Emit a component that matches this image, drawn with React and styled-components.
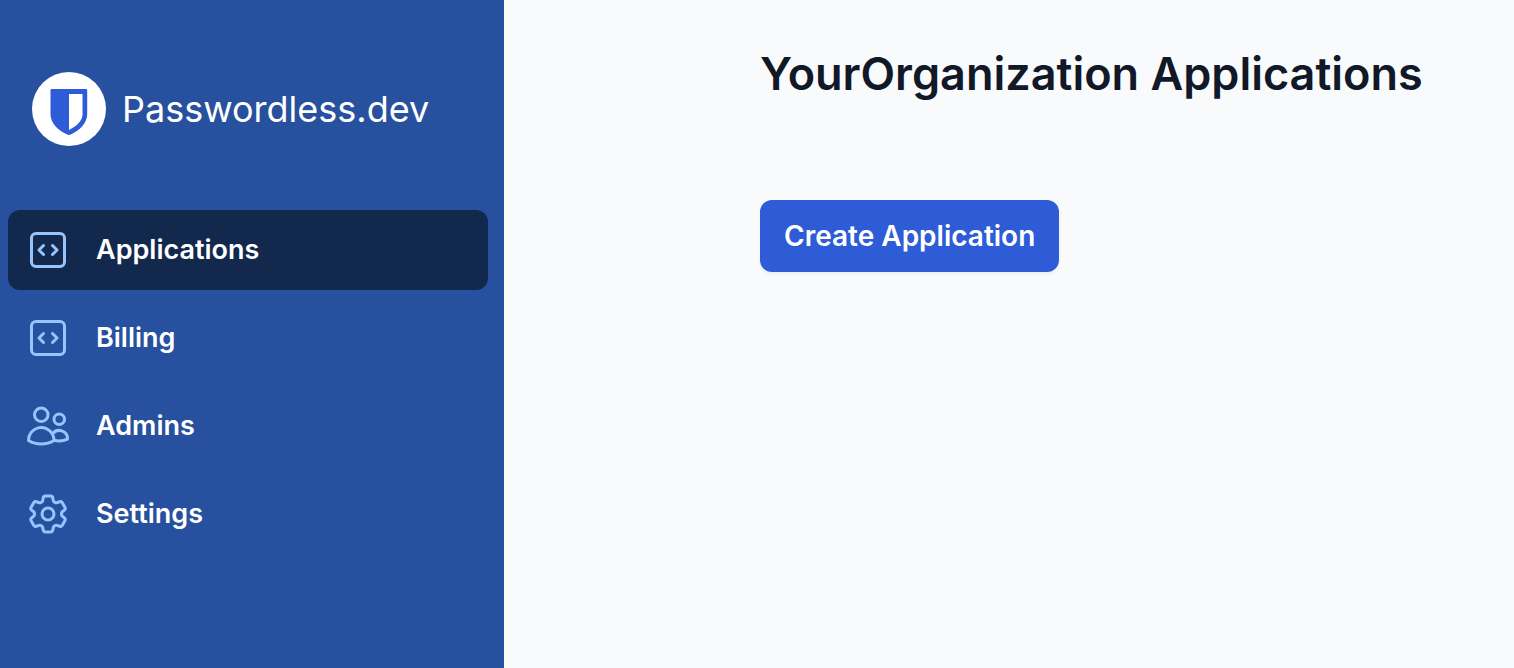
import React from 'react';
import styled, { createGlobalStyle } from 'styled-components';

const GlobalStyle = createGlobalStyle`
  *, *::before, *::after { box-sizing: border-box; }
  body {
    margin: 0;
    font-family: Inter, "Liberation Sans", sans-serif;
    background: #f9fafc;
    color: #111827;
    -webkit-font-smoothing: antialiased;
  }
`;

const Layout = styled.div`
  display: flex;
  min-height: 100vh;
`;

const Sidebar = styled.aside`
  flex: 0 0 504px;
  padding: 72px 16px 32px 8px;
  background: #27509e;
`;

const Brand = styled.a`
  display: flex;
  align-items: center;
  gap: 16px;
  height: 74px;
  margin: 0 0 64px 24px;
  color: #fff;
  text-decoration: none;
`;

const BrandName = styled.span`
  font-size: 36px;
  font-weight: 400;
  line-height: 48px;
`;

const NavList = styled.nav`
  display: flex;
  flex-direction: column;
  gap: 8px;
`;

const NavLink = styled.a`
  display: flex;
  align-items: center;
  gap: 24px;
  padding: 16px;
  border-radius: 12px;
  background: ${({ $active }) => ($active ? '#13284d' : 'transparent')};
  color: #fff;
  font-size: 27px;
  font-weight: 600;
  line-height: 48px;
  text-decoration: none;
`;

const NavIcon = styled.svg`
  width: 48px;
  height: 48px;
  flex: none;
  fill: none;
  stroke: #97c4fd;
  stroke-width: 1.5;
  stroke-linecap: round;
  stroke-linejoin: round;
`;

const Main = styled.main`
  flex: 1;
  min-width: 0;
  padding: 44px 64px 64px 256px;
`;

const Title = styled.h1`
  margin: 0 0 96px;
  font-size: 45px;
  font-weight: 600;
  line-height: 60px;
  white-space: nowrap;
`;

const PrimaryButton = styled.button`
  padding: 16px 24px;
  border: 0;
  border-radius: 12px;
  background: #2d5cd6;
  color: #fff;
  font: 600 28px/40px Inter, "Liberation Sans", sans-serif;
  box-shadow: 0 2px 4px rgba(0, 0, 0, 0.05);
  cursor: pointer;
`;

const CODE = ['M14.25 9.75 16.5 12l-2.25 2.25m-4.5 0L7.5 12l2.25-2.25M6 20.25h12A2.25 2.25 0 0 0 20.25 18V6A2.25 2.25 0 0 0 18 3.75H6A2.25 2.25 0 0 0 3.75 6v12A2.25 2.25 0 0 0 6 20.25Z'];
const USERS = ['M15 19.128a9.38 9.38 0 0 0 2.625.372 9.337 9.337 0 0 0 4.121-.952 4.125 4.125 0 0 0-7.533-2.493M15 19.128v-.003c0-1.113-.285-2.16-.786-3.07M15 19.128v.106A12.318 12.318 0 0 1 8.624 21c-2.331 0-4.512-.645-6.374-1.766l-.001-.109a6.375 6.375 0 0 1 11.964-3.07M12 6.375a3.375 3.375 0 1 1-6.75 0 3.375 3.375 0 0 1 6.75 0Zm8.25 2.25a2.625 2.625 0 1 1-5.25 0 2.625 2.625 0 0 1 5.25 0Z'];
const COG = [
  'M9.594 3.94c.09-.542.56-.94 1.11-.94h2.593c.55 0 1.02.398 1.11.94l.213 1.281c.063.374.313.686.645.87.074.04.147.083.22.127.325.196.72.257 1.075.124l1.217-.456a1.125 1.125 0 0 1 1.37.49l1.296 2.247a1.125 1.125 0 0 1-.26 1.431l-1.003.827c-.293.241-.438.613-.43.992a7.723 7.723 0 0 1 0 .255c-.008.378.137.75.43.991l1.004.827c.424.35.534.955.26 1.43l-1.298 2.247a1.125 1.125 0 0 1-1.369.491l-1.217-.456c-.355-.133-.75-.072-1.076.124a6.47 6.47 0 0 1-.22.128c-.331.183-.581.495-.644.869l-.213 1.281c-.09.543-.56.94-1.11.94h-2.594c-.55 0-1.019-.398-1.11-.94l-.213-1.281c-.062-.374-.312-.686-.644-.87a6.52 6.52 0 0 1-.22-.127c-.325-.196-.72-.257-1.076-.124l-1.217.456a1.125 1.125 0 0 1-1.369-.49l-1.297-2.247a1.125 1.125 0 0 1 .26-1.431l1.004-.827c.292-.24.437-.613.43-.991a6.932 6.932 0 0 1 0-.255c.007-.38-.138-.751-.43-.992l-1.004-.827a1.125 1.125 0 0 1-.26-1.43l1.297-2.247a1.125 1.125 0 0 1 1.37-.491l1.216.456c.356.133.751.072 1.076-.124.072-.044.146-.086.22-.128.332-.183.582-.495.644-.869l.214-1.28Z',
  'M15 12a3 3 0 1 1-6 0 3 3 0 0 1 6 0Z',
];

const items = [
  { label: 'Applications', icon: CODE, active: true },
  { label: 'Billing', icon: CODE },
  { label: 'Admins', icon: USERS },
  { label: 'Settings', icon: COG },
];

function Logo() {
  return (
    <svg width="74" height="74" viewBox="0 0 74 74" aria-hidden="true">
      <circle cx="37" cy="37" r="37" fill="#fff" />
      <path d="M20 17h34a1.3 1.3 0 0 1 1.2 1.3V42c0 9-7 16-16.5 20.5q-1.7.8-3.4 0C25.5 58 18.5 51 18.5 42V18.3A1.3 1.3 0 0 1 20 17Z" fill="#2d5cd6" />
      <path d="M37 22h13.5v20.5c0 6-5 11-13.5 15.5Z" fill="#fff" />
    </svg>
  );
}

export default function App() {
  return (
    <>
      <GlobalStyle />
      <Layout>
        <Sidebar>
          <Brand href="#home">
            <Logo />
            <BrandName>Passwordless.dev</BrandName>
          </Brand>
          <NavList aria-label="Main">
            {items.map(({ label, icon, active }) => (
              <NavLink key={label} href={`#${label.toLowerCase()}`} $active={active} aria-current={active ? 'page' : undefined}>
                <NavIcon viewBox="0 0 24 24" aria-hidden="true">
                  {icon.map((d) => <path key={d} d={d} />)}
                </NavIcon>
                {label}
              </NavLink>
            ))}
          </NavList>
        </Sidebar>
        <Main>
          <Title>YourOrganization Applications</Title>
          <PrimaryButton type="button">Create Application</PrimaryButton>
        </Main>
      </Layout>
    </>
  );
}
